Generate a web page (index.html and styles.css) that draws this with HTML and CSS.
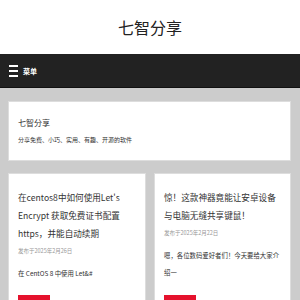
FILE: index.html
```html
<!DOCTYPE html>
<html lang="zh-CN">
<head>
<meta charset="utf-8">
<title>七智分享</title>
<link rel="stylesheet" href="styles.css">
</head>
<body>
<header class="site-header">
  <h1 class="site-title">七智分享</h1>
</header>
<nav class="menu-bar">
  <svg class="menu-icon" width="9" height="12" viewBox="0 0 9 12" aria-hidden="true">
    <rect x="0" y="0" width="9" height="2" fill="#fff"/>
    <rect x="0" y="5" width="9" height="2" fill="#fff"/>
    <rect x="0" y="10" width="9" height="2" fill="#fff"/>
  </svg>
  <span class="menu-label">菜单</span>
</nav>
<main class="content">
  <section class="intro card">
    <h2 class="intro-title">七智分享</h2>
    <p class="intro-desc">分享免费、小巧、实用、有趣、开源的软件</p>
  </section>
  <div class="posts">
    <article class="card post">
      <h3 class="post-title">在centos8中如何使用Let's Encrypt 获取免费证书配置https，并能自动续期</h3>
      <p class="post-date">发布于2025年2月26日</p>
      <p class="post-excerpt">在 CentOS 8 中使用 Let&amp;#</p>
      <span class="post-more"></span>
    </article>
    <article class="card post">
      <h3 class="post-title">惊！这款神器竟能让安卓设备与电脑无缝共享键鼠！</h3>
      <p class="post-date">发布于2025年2月22日</p>
      <p class="post-excerpt">嗯，各位数码爱好者们！今天要给大家介绍一</p>
      <span class="post-more"></span>
    </article>
  </div>
</main>
</body>
</html>
```

FILE: styles.css
```css
* { box-sizing: border-box; }
html, body { margin: 0; padding: 0; }
body {
  font-family: "Noto Sans CJK SC", "Noto Sans", sans-serif;
  color: #333;
  background: #ccc;
  overflow: hidden;
}
.site-header {
  background: #fff;
  height: 54px;
  display: flex;
  align-items: center;
  justify-content: center;
}
.site-title {
  margin: 0;
  font-size: 16px;
  font-weight: 400;
  color: #222;
  line-height: 1;
}
.menu-bar {
  height: 34px;
  background: #222;
  border-bottom: 1px solid #111;
  display: flex;
  align-items: center;
  padding-left: 9px;
  gap: 5px;
}
.menu-icon { display: block; }
.menu-label {
  color: #fff;
  font-size: 7px;
  font-weight: 700;
}
.content {
  padding: 13px 9px 0 8px;
}
.card {
  background: #fff;
  border: 1px solid #ddd;
}
.intro {
  height: 60px;
  padding: 14px 9px 0;
}
.intro-title {
  margin: 0;
  font-size: 8px;
  font-weight: 400;
  line-height: 14px;
  color: #333;
}
.intro-desc {
  margin: 6px 0 0;
  font-size: 6px;
  line-height: 8px;
  color: #333;
}
.posts {
  margin-top: 12px;
  display: grid;
  grid-template-columns: 138px 137px;
  gap: 8px;
  align-items: stretch;
}
.post {
  padding: 14px 9px 0;
  height: 148px;
  display: flex;
  flex-direction: column;
}
.post-title {
  margin: 0;
  font-size: 8.6px;
  font-weight: 400;
  line-height: 18px;
  color: #333;
}
.post-date {
  margin: 2px 0 0;
  font-size: 5.5px;
  line-height: 14px;
  color: #999;
}
.post-excerpt {
  margin: 7px 0 0;
  font-size: 6.4px;
  line-height: 17px;
  color: #333;
}
.post-more {
  display: block;
  width: 32px;
  height: 20px;
  background: #e5122d;
  margin-top: auto;
  margin-bottom: 5px;
}
```
